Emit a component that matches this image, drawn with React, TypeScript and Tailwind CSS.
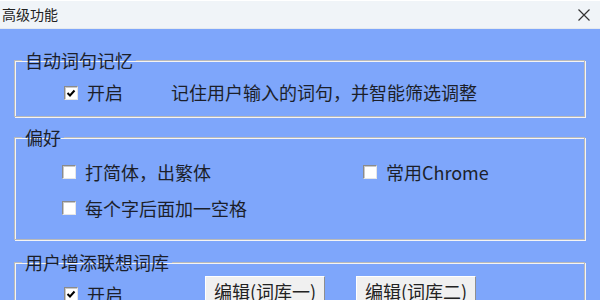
import type { ReactNode } from "react";

function CheckBox({ checked }: { checked?: boolean }) {
  return (
    <span className="flex size-[14px] shrink-0 items-center justify-center border-t border-l border-t-[#8a8a8a] border-l-[#8a8a8a] border-r border-b border-r-[#e6e6e6] border-b-[#e6e6e6] bg-white shadow-[inset_1px_1px_0_#c8c8c8]">
      {checked && (
        <svg width="10" height="10" viewBox="0 0 10 10" aria-hidden="true">
          <path d="M1.5 5 L4 7.5 L8.5 2.5" fill="none" stroke="#000" strokeWidth="2" />
        </svg>
      )}
    </span>
  );
}

function Option({ checked, label }: { checked?: boolean; label: string }) {
  return (
    <label className="flex h-6 items-center gap-[9px] whitespace-nowrap">
      <CheckBox checked={checked} />
      <span>{label}</span>
    </label>
  );
}

function Group({ title, className, children }: { title: string; className: string; children: ReactNode }) {
  return (
    <fieldset
      className={`border border-[#b9b9b9] shadow-[inset_1px_1px_0_#f4f4f4,1px_1px_0_#f4f4f4] ${className}`}
    >
      <legend className="ml-[7px] px-[3px] leading-6">{title}</legend>
      {children}
    </fieldset>
  );
}

function EditButton({ label }: { label: string }) {
  return (
    <button className="h-[30px] w-[120px] border-t border-l border-t-white border-l-white border-r border-b border-r-[#8f8f8f] border-b-[#8f8f8f] bg-[#f0f0f0] text-center leading-[28px] text-[#222]">
      {label}
    </button>
  );
}

export default function App() {
  return (
    <div
      className="flex h-[300px] w-[600px] flex-col overflow-hidden bg-[#7ea6fb] text-[18px] text-[#1c1f2a]"
      style={{ fontFamily: '"Noto Sans CJK SC", "Noto Sans", sans-serif' }}
    >
      <div className="flex h-[29px] shrink-0 items-center justify-between border-t border-white border-b border-b-[#e4e9ef] bg-[#f0f4f8] pl-[2px] pr-[10px]">
        <span className="text-[14px] text-[#222]">高级功能</span>
        <svg width="12" height="12" viewBox="0 0 12 12" aria-hidden="true">
          <path d="M0.5 0.5 L11.5 11.5 M11.5 0.5 L0.5 11.5" stroke="#333" strokeWidth="1.2" />
        </svg>
      </div>

      <div className="flex flex-col pl-[14px] pr-[15px]">
        <Group title="自动词句记忆" className="mt-[19px]">
          <div className="flex items-center pb-[10px] pl-[49px] pt-[7px]">
            <Option checked label="开启" />
            <span className="ml-[48px]">记住用户输入的词句，并智能筛选调整</span>
          </div>
        </Group>

        <Group title="偏好" className="mt-[8px]">
          <div className="grid grid-cols-[301px_1fr] gap-y-[12px] pb-[19px] pl-[47px] pt-[11px]">
            <Option label="打简体，出繁体" />
            <Option label="常用Chrome" />
            <Option label="每个字后面加一空格" />
          </div>
        </Group>

        <Group title="用户增添联想词库" className="mt-[10px]">
          <div className="flex items-start pb-[10px] pl-[49px] pt-[2px]">
            <div className="pt-[6px]">
              <Option checked label="开启" />
            </div>
            <div className="ml-[82px] flex gap-[31px]">
              <EditButton label="编辑(词库一)" />
              <EditButton label="编辑(词库二)" />
            </div>
          </div>
        </Group>
      </div>
    </div>
  );
}
